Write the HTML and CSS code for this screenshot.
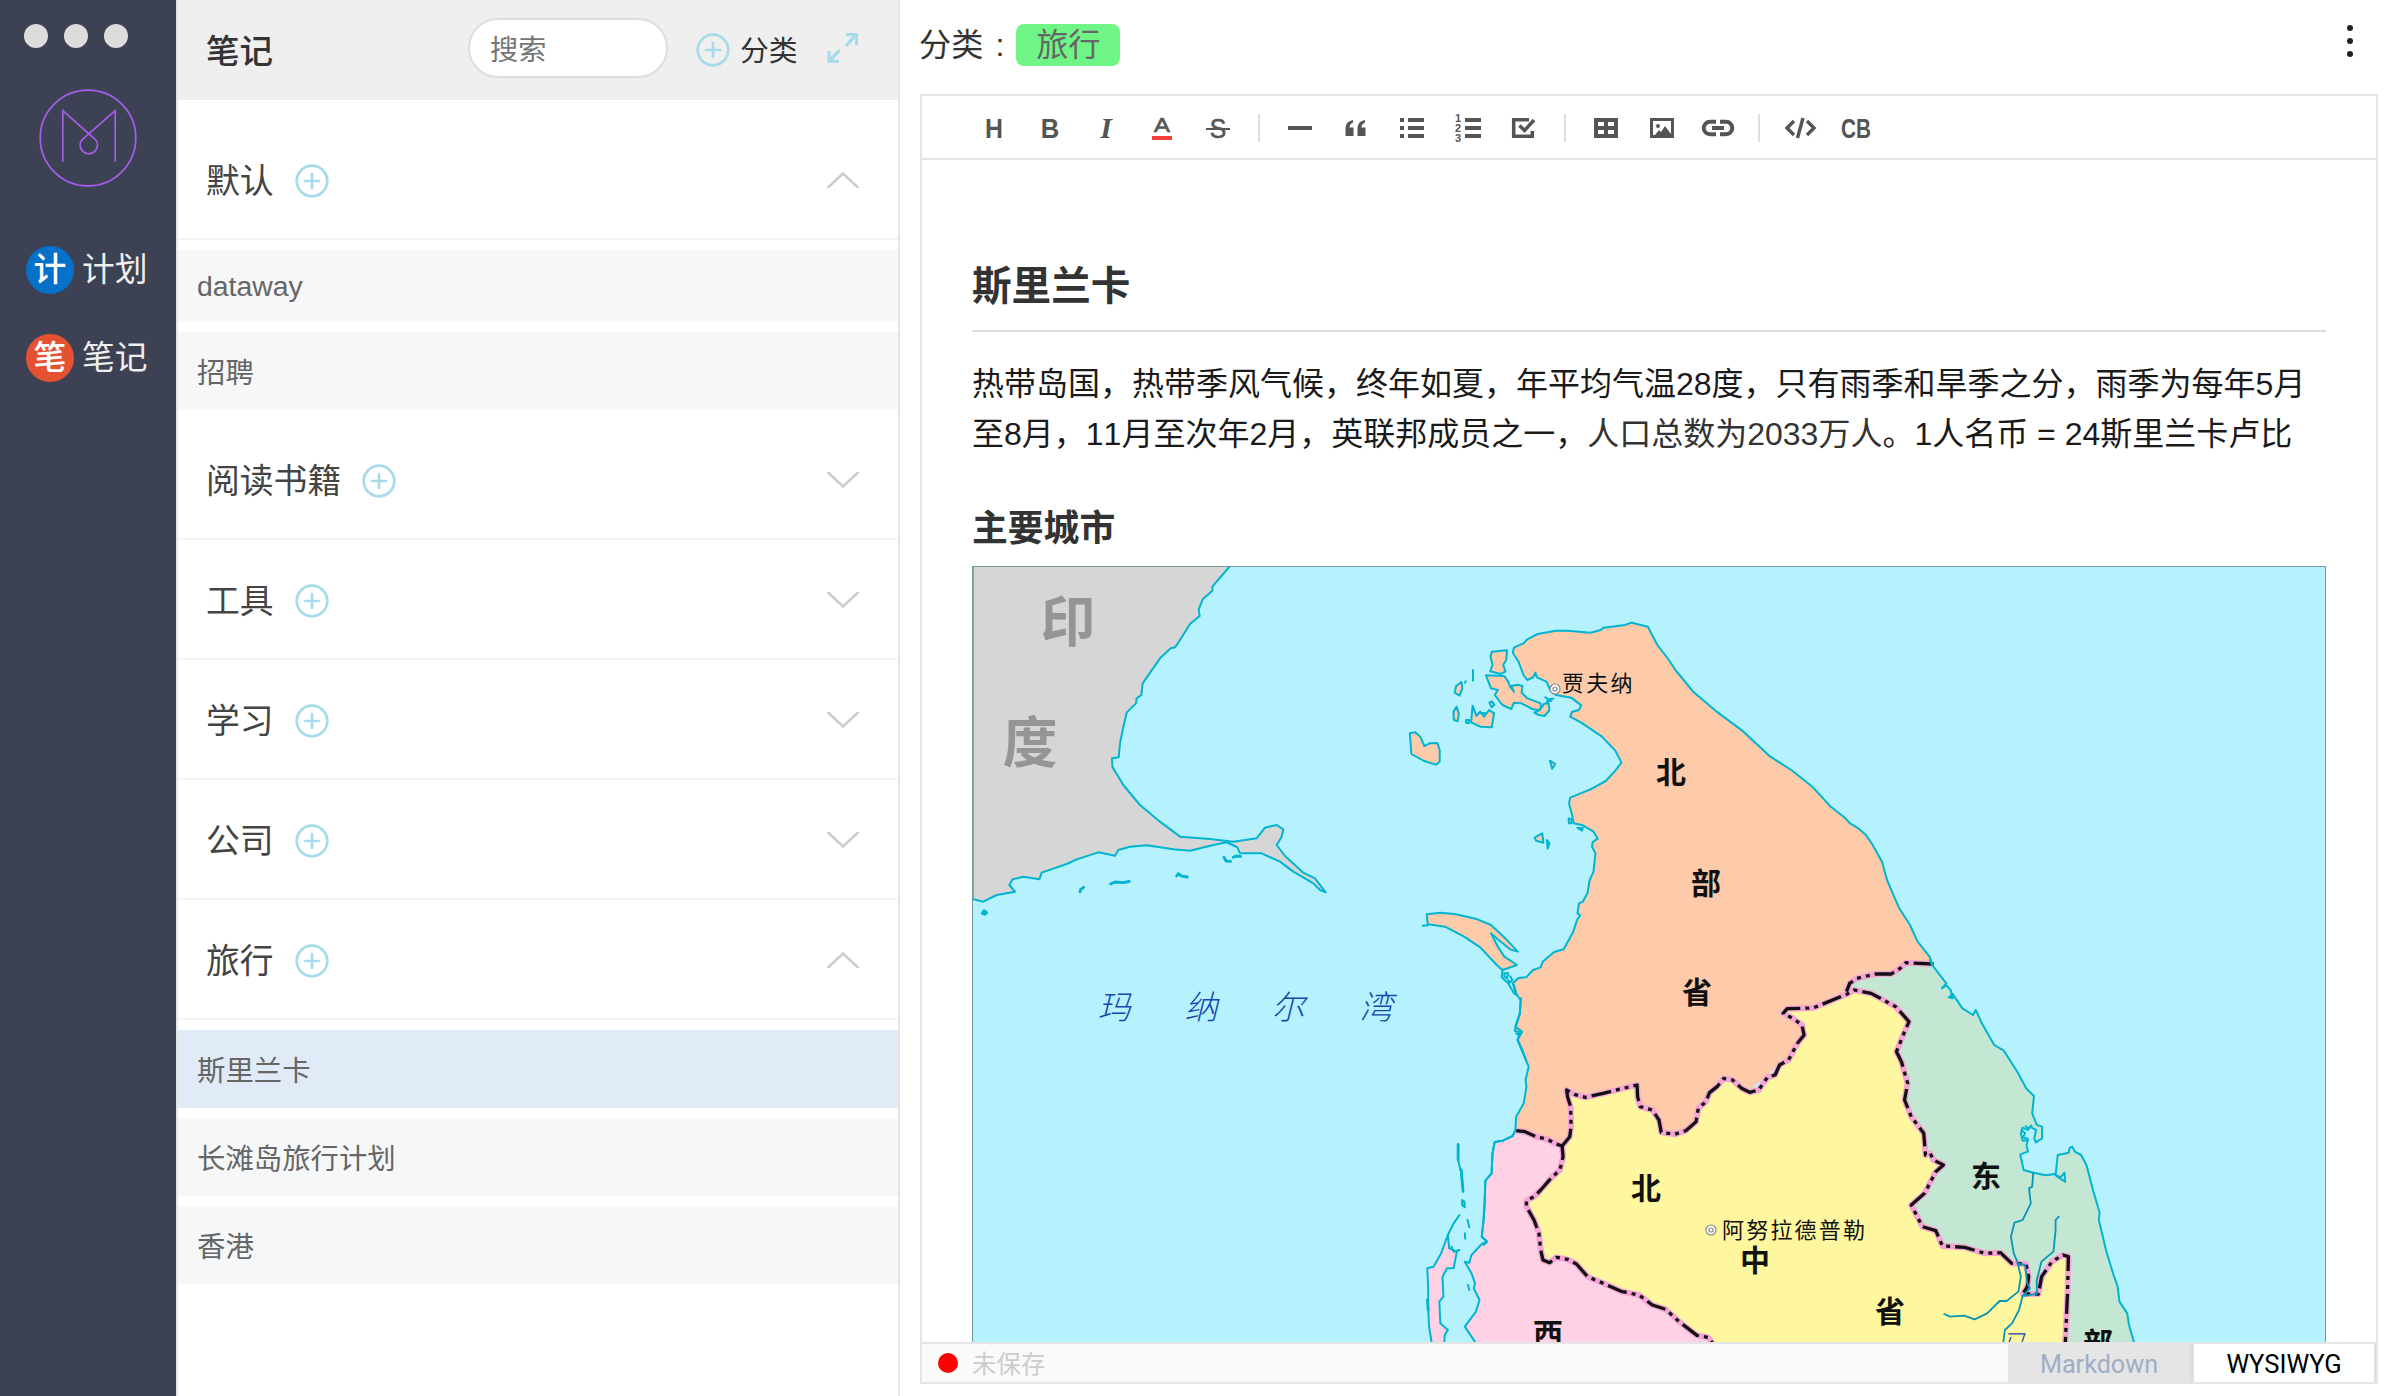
FILE: index.html
```html
<!DOCTYPE html>
<html lang="zh-CN">
<head>
<meta charset="utf-8">
<title>笔记</title>
<link rel="stylesheet" href="styles.css">
</head>
<body>
<svg class="defs" width="0" height="0">
  <symbol id="plus" viewBox="0 0 34 34"><g fill="none" stroke="#a6dbea" stroke-width="2.7"><circle cx="17" cy="17" r="15.3"/><path d="M10 17h14M17 10v14" stroke-linecap="round"/></g></symbol>
  <symbol id="up" viewBox="0 0 32 16"><path d="M-1 17.500L16 1.500L33 17.500" fill="none" stroke="#ccc" stroke-width="2.500"/></symbol>
  <symbol id="down" viewBox="0 0 32 16"><path d="M-1-1.500L16 14.500L33-1.500" fill="none" stroke="#ccc" stroke-width="2.500"/></symbol>
</svg>
<div class="app">
  <aside class="sidebar">
    <div class="window-dots"><i></i><i></i><i></i></div>
    <svg class="logo" viewBox="0 0 98 98"><g fill="none" stroke="#a55eea" stroke-width="1.700"><circle cx="49" cy="49" r="47.800"/><path d="M23.800 72.700V21.700L56.400 50.500A8.700 8.700 0 1 1 43.200 50.500L76.200 21.700V72.700"/></g></svg>
    <nav class="nav">
      <div class="nav-item"><b class="badge blue">计</b><span>计划</span></div>
      <div class="nav-item"><b class="badge red">笔</b><span>笔记</span></div>
    </nav>
  </aside>

  <section class="list-panel">
    <header class="list-header">
      <h1>笔记</h1>
      <div class="search">搜索</div>
      <svg class="plus"><use href="#plus"/></svg>
      <span class="add-label">分类</span>
      <svg class="expand" viewBox="0 0 32 30"><g fill="#a6dbea"><path d="M19 0h12v12h-3V5.500l-8 8.500-2.300-2.300L25.500 3.300H19zM0.500 30V18h3v6.200l8-8.200 2.300 2.300-8 8.500H12V30z"/></g></svg>
    </header>
    <div class="groups">
      <div class="group"><span>默认</span><svg class="plus"><use href="#plus"/></svg><svg class="chev"><use href="#up"/></svg></div>
      <ul class="notes">
        <li class="short">dataway</li>
        <li>招聘</li>
      </ul>
      <div class="group"><span>阅读书籍</span><svg class="plus"><use href="#plus"/></svg><svg class="chev"><use href="#down"/></svg></div>
      <div class="group"><span>工具</span><svg class="plus"><use href="#plus"/></svg><svg class="chev"><use href="#down"/></svg></div>
      <div class="group"><span>学习</span><svg class="plus"><use href="#plus"/></svg><svg class="chev"><use href="#down"/></svg></div>
      <div class="group"><span>公司</span><svg class="plus"><use href="#plus"/></svg><svg class="chev"><use href="#down"/></svg></div>
      <div class="group"><span>旅行</span><svg class="plus"><use href="#plus"/></svg><svg class="chev"><use href="#up"/></svg></div>
      <ul class="notes">
        <li class="active">斯里兰卡</li>
        <li>长滩岛旅行计划</li>
        <li>香港</li>
      </ul>
    </div>
  </section>

  <main class="main">
    <header class="main-header">
      <span class="cat-label">分类</span><span class="colon">:</span><span class="tag">旅行</span>
      <div class="more"><i></i><i></i><i></i></div>
    </header>
    <div class="editor">
      <div class="toolbar">
        <svg class="tool" viewBox="0 0 56 44"><text class="g" x="28" y="32" font-size="28" textLength="18" lengthAdjust="spacingAndGlyphs">H</text></svg>
        <svg class="tool" viewBox="0 0 56 44"><text class="g" x="28" y="32" font-size="28" textLength="18.500" lengthAdjust="spacingAndGlyphs">B</text></svg>
        <svg class="tool" viewBox="0 0 56 44"><text class="g it" x="28" y="32" font-size="30">I</text></svg>
        <svg class="tool" viewBox="0 0 56 44"><text class="g md" x="28" y="26" font-size="20" textLength="16" lengthAdjust="spacingAndGlyphs" stroke="#555" stroke-width=".6">A</text><rect x="18" y="30" width="20" height="4" fill="#f6403a"/></svg>
        <svg class="tool" viewBox="0 0 56 44"><text class="g md" x="28" y="32" font-size="27" textLength="16.500" lengthAdjust="spacingAndGlyphs" stroke="#555" stroke-width=".6">S</text><path d="M16 23h24" stroke="#555" stroke-width="2"/></svg>
        <i class="sep"></i>
        <svg class="tool" viewBox="0 0 56 44"><rect x="16" y="20" width="24" height="4"/></svg>
        <svg class="tool" viewBox="0 0 56 44"><path d="M17.500 30V22Q18 15 25 14V16.500Q21.500 18 21.500 21.500H25.500V30zM29.500 30V22Q30 15 37 14V16.500Q33.500 18 33.500 21.500H37.500V30z"/></svg>
        <svg class="tool" viewBox="0 0 56 44"><path d="M16 12h4v4h-4zM24 12h16v4H24zM16 20h4v4h-4zM24 20h16v4H24zM16 28h4v4h-4zM24 28h16v4H24z"/></svg>
        <svg class="tool" viewBox="0 0 56 44"><path d="M25 12h16v4H25zM25 20h16v4H25zM25 28h16v4H25z"/><text class="g" x="18" y="16" font-size="11">1</text><text class="g" x="18" y="26" font-size="11">2</text><text class="g" x="18" y="36" font-size="11">3</text></svg>
        <svg class="tool" viewBox="0 0 56 44"><path d="M33 13.700H17.700V30.300H36.300V25" fill="none" stroke="#555" stroke-width="3.500"/><path d="M23.500 19.500l5 5 9.500-10.500" fill="none" stroke="#555" stroke-width="3.500"/></svg>
        <i class="sep"></i>
        <svg class="tool" viewBox="0 0 56 44"><path fill-rule="evenodd" d="M16 12h24v20H16zM20 16v4h6v-4zM30 16v4h6v-4zM20 24v4h6v-4zM30 24v4h6v-4z"/></svg>
        <svg class="tool" viewBox="0 0 56 44"><path fill-rule="evenodd" d="M16 12h24v20H16zM19 15v14h2l4-5 2 2 4-6 6 8V15z"/><circle cx="24" cy="20" r="2"/></svg>
        <svg class="tool" viewBox="0 0 56 44"><path d="M26 15.700H20a6.300 6.300 0 0 0 0 12.600h6M30 15.700h6a6.300 6.300 0 0 1 0 12.600h-6M22 22h12" fill="none" stroke="#555" stroke-width="4"/></svg>
        <i class="sep"></i>
        <svg class="tool" viewBox="0 0 56 44"><path d="M22 15l-7 7 7 7M35 15l7 7-7 7M31 12l-5.500 20" fill="none" stroke="#555" stroke-width="3.400"/></svg>
        <svg class="tool" viewBox="0 0 56 44"><text class="g" x="28" y="32" font-size="28" textLength="30" lengthAdjust="spacingAndGlyphs">CB</text></svg>
      </div>
      <article class="doc">
        <h2>斯里兰卡</h2>
        <p>热带岛国，热带季风气候，终年如夏，年平均气温28度，只有雨季和旱季之分，雨季为每年5月<br>至8月，11月至次年2月，英联邦成员之一，<span class="soft">人口总数为2033万人</span>。1人名币 = 24斯里兰卡卢比</p>
        <h3>主要城市</h3>
        <div class="map">
          <svg viewBox="972 566 1354 776" width="1354" height="776">
            <rect x="972" y="566" width="1354" height="776" fill="#b5f2fe"/>
            <g class="coast" transform="translate(960 560) scale(.333333)">
              <path fill="#d6d6d6" d="M38 18L810 18 757 80 757 92 728 118 716 148 719 168 690 192 660 240 645 262 632 265 600 295 548 370 544 405 530 415 528 430 500 458 488 510 480 550 476 592 456 595 457 620 490 675 540 735 600 785 660 830 750 837 820 845 890 835 915 803 950 795 970 808 965 830 950 855 975 888 1030 938 1065 955 1097 997 1080 990 1060 970 1000 935 960 905 905 880 840 880 832 862 818 855 800 847 760 855 690 872 640 868 560 856 510 860 475 870 465 887 415 877 350 898 320 912 245 938 238 958 190 950 158 958 148 975 165 995 110 1005 70 1025 38 1017z"/>
              <path class="islet" fill="none" d="M792 892L798 903 812 904M820 892L828 888 842 889M650 948L655 941 664 948 682 951M452 972L465 966 490 968 508 964M360 996L362 988 371 982M67 1060L72 1052 80 1058 74 1063 67 1060"/>
            </g>

            <g transform="translate(1380 560) scale(.382653 .333333)">
              <path fill="#fdcbaa" d="M1444 1213L1436 1190 1405 1145 1385 1095 1357 1045 1340 1000 1325 960 1312 905 1285 850 1270 825 1250 805 1228 790 1215 773 1175 737 1130 680 1075 630 1020 590 950 515 880 455 820 397 772 330 755 300 725 255 708 218 700 200 658 188 640 195 585 203 575 211 550 218 490 212 460 212 412 222 385 238 375 250 350 263 347 278 362 305 375 345 385 360 400 352 406 338 410 352 435 365 445 390 460 405 500 413 526 436 520 450 502 455 497 470 525 487 580 530 615 572 631 608 615 632 590 663 550 688 497 713 494 730 502 765 506 790 530 796 558 815 569 836 556 846 554 860 563 880 558 935 548 960 542 1000 530 1025 520 1030 516 1060 523 1066 515 1080 505 1115 480 1168 455 1176 425 1205 420 1222 400 1230 382 1252 362 1254 347 1270 355 1300 367 1320 366 1360 355 1400 352 1412 362 1418 360 1440 372 1470 382 1500 1200 1500z"/>
            </g>
            <g transform="translate(1380 940) scale(.446429 .333333)">
              <path fill="#fdcbaa" d="M316 175L313 220 303 260 310 278 308 300 333 380 326 420 328 440 322 490 305 530 303 572 408 625 700 600 1000 250 1045 100z"/>
              <path class="fill-coast" fill="#ffd1e4" d="M303 572L297 588 275 602 257 606 252 640 250 700 236 722 234 800 232 840 228 890 240 905 228 912 205 945 200 968 190 965 205 1000 213 1030 210 1045 223 1080 215 1115 190 1160 215 1210 745 1210 700 1000 408 618z"/>
              <path class="fill-coast" fill="#ffd1e4" d="M152 885L137 940 120 980 106 985 108 1050 108 1110 110 1160 116 1210 144 1210 145 1185 152 1170 135 1150 133 1085 142 1070 140 1010 150 985 165 985 172 935 155 925z"/>
            </g>
            <g transform="translate(1840 900) scale(.354610 .333333)">
              <path fill="#c3e7d2" d="M20 280L40 235 105 215 145 218 180 188 258 192 285 230 300 250 312 270 318 285 345 325 375 345 383 330 400 370 435 435 462 452 500 515 525 565 547 588 542 640 555 675 570 680 570 715 552 727 548 715 550 690 535 680 515 683 510 700 515 722 530 720 526 735 530 755 508 763 518 810 545 818 580 826 605 822 612 830 612 765 645 758 652 745 660 755 680 765 695 795 712 865 732 938 730 960 750 1050 770 1120 783 1160 788 1205 810 1240 815 1275 830 1330 200 1330 100 600z"/>
            </g>
            <g transform="translate(1380 940) scale(.446429 .333333)">
              <path fill="#fff79f" d="M408 618L425 590 428 560 427 500 420 470 418 450 435 463 460 472 500 460 560 440 576 435 577 470 583 500 610 510 625 540 630 577 660 583 685 572 708 545 713 505 730 485 738 458 755 440 770 415 790 420 810 445 828 457 848 450 868 412 885 405 895 375 915 360 935 310 950 285 945 255 925 235 903 220 912 206 970 204 1045 163 1062 150 1100 160 1125 178 1155 200 1185 245 1172 285 1157 335 1168 365 1182 430 1175 480 1190 530 1218 580 1222 645 1232 640 1240 660 1262 675 1245 695 1220 760 1190 795 1215 860 1245 872 1260 918 1310 922 1355 940 1390 938 1415 970 1447 972 1453 1010 1450 1040 1440 1062 1475 1062 1482 1010 1505 965 1530 945 1542 950 1540 1060 1535 1210 745 1210 735 1192 710 1186 670 1145 640 1108 610 1095 580 1065 540 1054 500 1030 465 1010 440 972 420 958 395 952 380 968 365 960 360 930 356 880 345 840 328 800 328 782 345 770 360 750 385 712 403 690 410 650z"/>
              <g class="border pink"><path d="M305 572L325 575 350 590 375 598 395 612 408 618 410 650 403 690 385 712 360 750 345 770 328 782 328 800 345 840 356 880 360 930 365 960 380 968 395 952 420 958 440 972 465 1010 500 1030 540 1054 580 1065 610 1095 640 1108 670 1145 710 1186 735 1192 745 1210"/><path d="M408 618L425 590 428 560 427 500 420 470 418 450 435 463 460 472 500 460 560 440 576 435 577 470 583 500 610 510 625 540 630 577 660 583 685 572 708 545 713 505 730 485 738 458 755 440 770 415 790 420 810 445 828 457 848 450 868 412 885 405 895 375 915 360 935 310 950 285 945 255 925 235 903 220 912 206 970 204 1045 163 1062 150 1100 160 1125 178 1155 200 1185 245 1172 285 1157 335 1168 365 1182 430 1175 480 1190 530 1218 580 1222 645 1232 640 1240 660 1262 675 1245 695 1220 760 1190 795 1215 860 1245 872 1260 918 1310 922 1355 940 1390 938 1415 970 1447 972 1453 1010 1450 1040 1440 1062 1475 1062 1482 1010 1505 965 1530 945 1542 950 1540 1060 1535 1210"/><path d="M1240 72L1178 68 1165 85 1145 102 1110 102 1068 115 1052 130 1045 155"/></g>
              <g class="border dash"><path d="M305 572L325 575 350 590 375 598 395 612 408 618 410 650 403 690 385 712 360 750 345 770 328 782 328 800 345 840 356 880 360 930 365 960 380 968 395 952 420 958 440 972 465 1010 500 1030 540 1054 580 1065 610 1095 640 1108 670 1145 710 1186 735 1192 745 1210"/><path d="M408 618L425 590 428 560 427 500 420 470 418 450 435 463 460 472 500 460 560 440 576 435 577 470 583 500 610 510 625 540 630 577 660 583 685 572 708 545 713 505 730 485 738 458 755 440 770 415 790 420 810 445 828 457 848 450 868 412 885 405 895 375 915 360 935 310 950 285 945 255 925 235 903 220 912 206 970 204 1045 163 1062 150 1100 160 1125 178 1155 200 1185 245 1172 285 1157 335 1168 365 1182 430 1175 480 1190 530 1218 580 1222 645 1232 640 1240 660 1262 675 1245 695 1220 760 1190 795 1215 860 1245 872 1260 918 1310 922 1355 940 1390 938 1415 970 1447 972 1453 1010 1450 1040 1440 1062 1475 1062 1482 1010 1505 965 1530 945 1542 950 1540 1060 1535 1210"/><path d="M1240 72L1178 68 1165 85 1145 102 1110 102 1068 115 1052 130 1045 155"/></g>
            </g>

            <g class="coast" fill="none" transform="translate(1380 560) scale(.382653 .333333)">
              <path d="M1444 1213L1436 1190 1405 1145 1385 1095 1357 1045 1340 1000 1325 960 1312 905 1285 850 1270 825 1250 805 1228 790 1215 773 1175 737 1130 680 1075 630 1020 590 950 515 880 455 820 397 772 330 755 300 725 255 708 218 700 200 658 188 640 195 585 203 575 211 550 218 490 212 460 212 412 222 385 238 375 250 350 263 347 278 362 305 375 345 385 360 400 352 406 338 410 352 435 365 445 390 460 405 500 413 526 436 520 450 502 455 497 470 525 487 580 530 615 572 631 608 615 632 590 663 550 688 497 713 494 730 502 765 506 790 530 796 558 815 569 836 556 846 554 860 563 880 558 935 548 960 542 1000 530 1025 520 1030 516 1060 523 1066 515 1080 505 1115 480 1168 455 1176 425 1205 420 1222 400 1230 382 1252 362 1254 347 1270 355 1300 367 1320 366 1360 355 1400 352 1412 370 1418 362 1430 360 1440 372 1470 382 1500"/>
              <g fill="#fdcbaa">
                <path d="M292 275L332 271 330 300 322 315 328 335 315 342 288 334 294 315 289 290z"/>
                <path d="M277 346L325 348 335 365 340 380 350 395 343 378 360 374 372 378 370 398 385 415 420 430 420 450 400 448 370 430 350 428 343 447 320 435 300 405 308 390 290 385z"/>
                <path d="M403 458L418 450 428 432 440 428 443 450 430 468 415 465z"/>
                <path d="M242 437L252 468 262 455 272 470 285 450 298 460 292 502 262 500 238 487z"/>
                <path d="M213 366L215 385 208 407 195 398 199 378zM200 440L206 460 203 484 193 480 192 455zM286 428L292 424 299 434 292 442zM225 480L233 480 232 490 225 488z"/>
                <path d="M78 520L92 517 105 530 116 558 130 550 150 549 156 570 156 605 146 614 115 603 82 582z"/>
                <path d="M444 602L458 612 450 626zM424 820L427 848 408 842 404 833zM436 840L443 850 438 866zM493 775L501 778 500 790 494 790zM516 804L530 804 528 812z"/>
                <path d="M122 1063L158 1058 195 1062 250 1076 290 1095 330 1138 360 1175 340 1168 310 1140 290 1120 308 1160 325 1190 358 1215 320 1230 305 1215 262 1162 220 1130 170 1100 125 1093z"/>
              </g>
              <path d="M243 330L243 362M224 364L222 368M432 412L440 418 453 416M436 424L448 422M112 1097L124 1096M320 1232L318 1252 335 1270 350 1300 358 1305M325 1240L335 1240 332 1255 325 1250zM340 1248L346 1260 340 1268 335 1260M350 1275L356 1300M258 458L275 460M356 1420L362 1425 368 1412"/>
            </g>
            <g class="coast" fill="none" transform="translate(1380 940) scale(.446429 .333333)">
              <path d="M316 175L313 220 303 260 318 275 308 300 333 380 326 420 328 440 322 490 305 530 303 572 297 588 275 602 257 606 252 640 250 700 236 722 234 800 232 840 228 890 240 905 232 915M175 612L175 660 182 700 186 755M184 780L189 785 190 802 184 795zM196 840L200 862M190 880L191 896M178 825L165 850 152 885M197 1035L200 1050M160 920L165 935 178 930"/>
              <path class="islet" d="M175 615L175 660M182 690L186 753M106 1080L108 1110"/>
            </g>
            <g class="coast" fill="none" transform="translate(1840 900) scale(.354610 .333333)">
              <path d="M254 180L258 192 285 230 300 250 287 265 300 256 312 270 318 295 307 292 318 282 345 325 375 345 383 330 400 370 435 435 462 452 500 515 525 565 547 588 542 640 555 675 570 680 570 715 552 727 548 715 553 690 535 680 530 690 515 683 510 700 515 722 530 720 526 735 530 755 508 763 518 810 545 818 580 826 605 822 612 830 635 845 633 818 622 832 608 825 614 765 645 758 647 745 655 740 662 755 680 765 695 795 712 865 732 938 730 960 750 1050 770 1120 783 1160 788 1205 810 1240 815 1275 830 1330"/>
              <path d="M512 690L522 700 516 712 530 716M524 678L530 688 540 676"/>
              <path class="river" d="M545 818L542 860 533 865 538 910 515 960 492 968 482 1010 490 1060 500 1085 510 1130 503 1175 470 1203 450 1203 415 1240 380 1258 350 1247 310 1250 294 1242M617 950L608 960 608 990 602 1055 568 1085 555 1140 555 1182 515 1188 505 1230 485 1270 465 1290 460 1330M500 1090L522 1095 528 1150 536 1165 515 1188"/>
            </g>

            <g class="ring"><circle cx="1555" cy="689" r="5"/><circle cx="1555" cy="689" r="2"/><circle cx="1711" cy="1230" r="5"/><circle cx="1711" cy="1230" r="2"/></g>
            <g class="country"><text x="1068" y="641">印</text><text x="1030" y="762">度</text></g>
            <g class="sea"><text x="1114" y="1019">玛</text><text x="1201" y="1019">纳</text><text x="1288" y="1019">尔</text><text x="1376" y="1019">湾</text><text x="2013" y="1354" font-size="27">马</text></g>
            <g class="province"><text x="1671" y="783">北</text><text x="1706" y="894">部</text><text x="1697" y="1003">省</text><text x="1646" y="1199">北</text><text x="1755" y="1271">中</text><text x="1890" y="1322">省</text><text x="1548" y="1345">西</text><text x="1986" y="1187">东</text><text x="2098" y="1354">部</text></g>
            <g class="city"><text x="1562" y="691">贾夫纳</text><text x="1722" y="1238">阿努拉德普勒</text></g>
            <path d="M972.500 1342V566.500H2325.500V1342" fill="none" stroke="#6f9a9c"/>
          </svg>
        </div>
      </article>
      <footer class="status">
        <i class="dot"></i><span class="unsaved">未保存</span>
        <div class="tab">Markdown</div>
        <div class="tab current">WYSIWYG</div>
      </footer>
    </div>
  </main>
</div>
</body>
</html>
```

FILE: styles.css
```css
* { box-sizing: border-box; }
html, body { margin: 0; height: 100%; }
body {
  font-family: "Liberation Sans", "Noto Sans CJK SC", sans-serif;
  font-kerning: none;
  color: #333;
  background: #fff;
  overflow: hidden;
}
h1, h2, h3, p, ul { margin: 0; padding: 0; }
.defs { display: none; }
.app { display: flex; width: 2396px; height: 1396px; }

.sidebar { width: 176px; background: #3c4254; padding-top: 24px; }
.window-dots { display: flex; gap: 16px; padding-left: 24px; }
.window-dots i { width: 24px; height: 24px; border-radius: 50%; background: #dcdcdc; }
.logo { display: block; width: 98px; height: 98px; margin: 41px 0 0 39px; }
.nav { display: flex; flex-direction: column; gap: 40px; padding: 59px 0 0 26px; }
.nav-item { display: flex; align-items: center; gap: 8px; height: 48px; font-size: 32.800px; color: #eee; }
.nav-item span { line-height: 48px; }
.badge { width: 48px; height: 48px; border-radius: 50%; color: #fff; font-weight: 500; text-align: center; line-height: 48px; }
.blue { background: #0571c9; }
.red { background: #e45232; }

.list-panel { width: 724px; border-left: 2px solid #e5e5e5; border-right: 2px solid #e5e5e5; }
.list-header { display: flex; align-items: center; height: 100px; background: #efefef; padding-left: 28px; }
.list-header h1 { width: 262px; font-size: 33.500px; font-weight: 500; line-height: 50px; padding-top: 3px; }
.search { width: 200px; height: 60px; margin-top: -4px; border: 2px solid #ddd; border-radius: 30px; background: #fff; padding-left: 20px; font-size: 28.200px; line-height: 60px; color: #757575; }
.plus { width: 34px; height: 34px; flex: none; }
.list-header .plus { margin: -1px 0 0 28px; }
.add-label { margin-left: 10px; font-size: 28.800px; width: 87px; line-height: 48px; padding-top: 1px; }
.expand { width: 32px; height: 30px; margin-top: -5px; }

.groups { padding-top: 20px; }
.group { display: flex; align-items: center; height: 120px; border-bottom: 2px solid #f3f3f3; padding: 2px 39px 0 28px; font-size: 33.800px; color: #444; }
.group span { margin-top: -3px; }
.group .plus { margin: 1px 0 0 21px; }
.chev { width: 32px; height: 16px; margin: -1px 0 0 auto; }
.notes { list-style: none; padding-bottom: 10px; }
.notes li { height: 78px; margin-top: 10px; padding-left: 19px; background: #f5f7f9; font-size: 28.400px; line-height: 82px; color: #666; }
.notes .short { height: 72px; line-height: 73px; }
.notes .active { background: #e1ebf7; }

.main { width: 1496px; padding: 0 18px 0 20px; }
.main-header { display: flex; align-items: center; height: 94px; padding-bottom: 4px; font-size: 32.200px; line-height: 42px; }
.cat-label { margin-left: -1px; }
.colon { width: 33px; text-align: center; }
.tag { width: 104px; height: 42px; border-radius: 8px; background: #6ef585; color: #666; text-align: center; }
.more { display: flex; flex-direction: column; gap: 7px; margin: -8px 25px 0 auto; }
.more i { width: 6px; height: 6px; border-radius: 50%; background: #222; }

.editor { display: flex; flex-direction: column; width: 1458px; height: 1290px; border: 2px solid #e5e5e5; }
.toolbar { display: flex; align-items: center; flex: none; height: 64px; border-bottom: 2px solid #e5e5e5; padding: 1px 0 0 44px; }
.tool { width: 56px; height: 44px; fill: #555; flex: none; }
.g { font-weight: 700; text-anchor: middle; }
.md { font-weight: 400; }
.it { font-family: "Liberation Serif", serif; font-style: italic; }
.sep { width: 2px; height: 28px; margin: 0 12px; background: #ddd; }

.doc { flex: 1; min-height: 0; overflow: hidden; padding: 90px 50px 0; color: #333; }
.doc h2 { height: 82px; font-size: 39.600px; line-height: 73px; border-bottom: 2px solid #dbdbdb; }
.doc p { margin-top: 27px; font-size: 32px; line-height: 50px; color: #1a1a1a; white-space: nowrap; }
.soft { color: #333; }
.doc h3 { margin-top: 45px; font-size: 35.800px; line-height: 50px; }
.map { margin-top: 12px; height: 776px; }
.map svg { display: block; }
.map text { font-family: "Noto Sans CJK SC", sans-serif; }
.map path { vector-effect: non-scaling-stroke; stroke-linejoin: round; }
.coast path, .fill-coast { stroke: #00b4d2; stroke-width: 2px; stroke-linecap: round; }
.coast .islet { stroke-width: 2.800px; }
.coast .river { stroke: #0795b8; stroke-width: 1.800px; }
.border path { fill: none; }
.pink path { stroke: #f6a3d6; stroke-width: 6px; }
.dash path { stroke: #111; stroke-width: 3.300px; stroke-dasharray: 20 5 4 5 4 5; }
.ring { fill: #fff; stroke: #888; stroke-width: 1.200px; }
.country { font-size: 55px; font-weight: 700; fill: #959595; text-anchor: middle; }
.sea { font-size: 33px; font-weight: 300; font-style: italic; fill: #1547ad; text-anchor: middle; }
.province { font-size: 30px; font-weight: 700; fill: #111; text-anchor: middle; }
.city { font-size: 22px; fill: #111; letter-spacing: 2.200px; }

.status { display: flex; align-items: center; flex: none; height: 40px; border-top: 2px solid #e5e5e5; background: #fafaf9; padding-left: 16px; }
.dot { width: 20px; height: 20px; border-radius: 50%; background: #f00; }
.unsaved { margin-left: 14px; font-size: 24.500px; line-height: 38px; padding-top: 3px; color: #ccc; }
.tab { width: 182px; height: 38px; margin-left: auto; background: #e5e5e5; color: #a0aec5; font: 25.200px/41px Roboto, sans-serif; text-align: center; }
.current { width: 186px; margin: 0; border-left: 4px solid #ddd; border-right: 2px solid #ddd; background: #fff; color: #000; font-size: 25.600px; }
```
